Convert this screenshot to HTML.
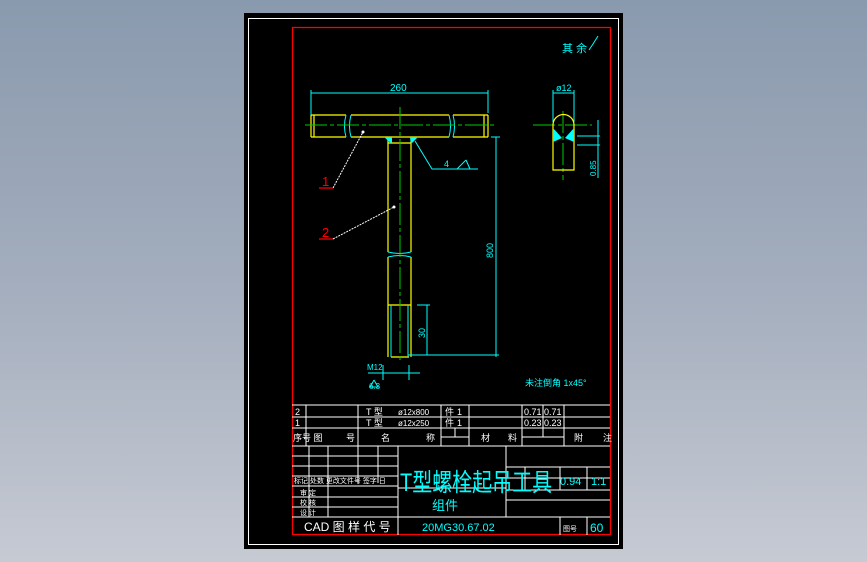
<!DOCTYPE html>
<html><head><meta charset="utf-8"><style>
html,body{margin:0;padding:0;}
body{width:867px;height:562px;overflow:hidden;background:linear-gradient(#8a9aae,#a3adbd 50%,#c6cad3);}
svg{position:absolute;left:0;top:0}
text{font-family:"Liberation Sans","Noto Sans CJK SC",sans-serif;}
</style></head><body>
<svg width="867" height="562" viewBox="0 0 867 562" xmlns="http://www.w3.org/2000/svg">
<rect x="244" y="13" width="379" height="536" fill="#000"/>
<rect x="248.5" y="18.5" width="370" height="526" fill="none" stroke="#fff" stroke-width="1"/>
<rect x="292.5" y="27.5" width="318" height="507" fill="none" stroke="#f00" stroke-width="1.3"/>
<g fill="none" stroke-width="1.2">
<!-- crossbar -->
<g stroke="#ff0">
<path d="M311 115H346M351 115H449M453 115H488M311 137H346M351 137H449M453 137H488M311 115V137M314 115V137M488 115V137M484 115V137"/>
<path d="M388 137V252M411 137V252M388 257V357M411 257V357M388 143H411M388 305H411M391 357H409"/>
</g>
<g stroke="#0ff" stroke-width="1">
<path d="M346 115q-3 11 0 22M351 115q-3 11 0 22M449 115q3 11 0 22M453 115q3 11 0 22"/>
<path d="M388 252q12 3 23 0M388 257q12-3 23 0M391 305V357M408 305V357"/>
<path d="M311 90V115M488 90V113M311 93H488M491 137H500M496 137V357M408 355H499M417 305H430M427 305V355"/>
<path d="M415 141L432 169H478M457 169L466 160"/><path d="M466 160L470 169"/>
<path d="M383 365V380M409 365V380M368 373H420M374 380L370 387M374 380L378 387H369"/>
<path d="M553 90V122M574 90V122M553 93H574M577 136H600M577 145H600M598 120V178"/>
</g>
<g stroke="#0c0" stroke-width="1" stroke-dasharray="22 3 4 3">
<path d="M400 107V362M305 125H495M563 111V180M533 125H592"/>
</g>
<g stroke="#ff0"><path d="M553 125A10.5 10.5 0 0 1 574 125V170H553Z"/></g>
<g stroke="#fff" stroke-width="1" stroke-dasharray="2 1"><path d="M333 188L363 132M333 239L394 207"/></g>
<g stroke="#f00"><path d="M319 188H333M319 239H333"/></g>
</g>
<g fill="#0ff"><path d="M384 137H392V144ZM410 137H418L411 144Z"/><path d="M553 128L562 138L553 142ZM574 128L565 138L574 142Z"/></g>
<g fill="#fff"><circle cx="363" cy="132" r="1.5"/><circle cx="394" cy="207" r="1.5"/></g>
<g fill="#0ff" font-size="10">
<text x="390" y="91">260</text><text x="556" y="91" font-size="9">ø12</text>
<text x="444" y="167" font-size="9">4</text>
<text transform="translate(493,258) rotate(-90)" font-size="9">800</text>
<text transform="translate(425,338) rotate(-90)" font-size="9">30</text>
<text transform="translate(596,176) rotate(-90)" font-size="8">0.85</text>
<text x="367" y="370" font-size="8">M12</text><text x="369" y="389" font-size="8">6.3</text>
<text x="525" y="386" font-size="9">未注倒角 1x45°</text>
<text x="562" y="52" font-size="11">其 余</text>
</g>
<path d="M589 50L593 44L598 36" stroke="#0ff" fill="none"/>
<g fill="#f00" font-size="13"><text x="322" y="186">1</text><text x="322" y="237">2</text></g>
<!-- table -->
<g stroke="#fff" stroke-width="1" fill="none">
<path d="M292 405H610M292 417H610M292 428H610M292 446H610M292 517H610"/>
<path d="M306 405V446M358 405V446M441 405V446M469 405V446M522 405V446M543 405V437M564 405V446M441 437H469M522 437H564M455 428V437"/>
<path d="M309 446V517M328 446V517M358 446V483M378 446V483M398 446V535M292 456H398M292 466H398M292 476H398M292 486H398M292 497H398M292 507H398"/>
<path d="M506 446V517M398 488H506M506 467H610M506 478H610M506 490H610M506 500H610M525 467V490M560 467V490M587 467V490"/>
<path d="M560 517V535M587 517V535"/>
</g>
<g fill="#fff" font-size="9">
<text x="295" y="415">2</text><text x="295" y="426">1</text>
<text x="366" y="415">T 型</text><text x="398" y="415" font-size="8">ø12x800</text>
<text x="366" y="426">T 型</text><text x="398" y="426" font-size="8">ø12x250</text>
<text x="445" y="415">件</text><text x="457" y="415">1</text><text x="445" y="426">件</text><text x="457" y="426">1</text>
<text x="524" y="415">0.71</text><text x="544" y="415">0.71</text>
<text x="524" y="426">0.23</text><text x="544" y="426">0.23</text>
<text x="293" y="441">序号 图</text><text x="346" y="441">号</text><text x="381" y="441">名</text><text x="426" y="441">称</text>
<text x="481" y="441">材</text><text x="508" y="441">料</text><text x="574" y="441">附</text><text x="603" y="441">注</text>
<text x="294" y="483" font-size="7">标记 处数 更改文件号 签字 日</text>
<text x="300" y="495" font-size="7">审 定</text><text x="300" y="505" font-size="7">校 核</text><text x="300" y="515" font-size="7">设 计</text>
<text x="304" y="531" font-size="12">CAD 图 样 代 号</text>
<text x="563" y="531" font-size="7">图号</text>
</g>
<g fill="#0ff">
<text x="400" y="481" font-size="20" transform="translate(0,-110) scale(1,1.25)" >T型螺栓起吊工具</text>
<text x="432" y="510" font-size="13">组件</text>
<text x="560" y="485" font-size="11">0.94</text><text x="591" y="485" font-size="11">1:1</text>
<text x="422" y="531" font-size="11">20MG30.67.02</text><text x="590" y="532" font-size="12">60</text>
</g>
</svg>
</body></html>
